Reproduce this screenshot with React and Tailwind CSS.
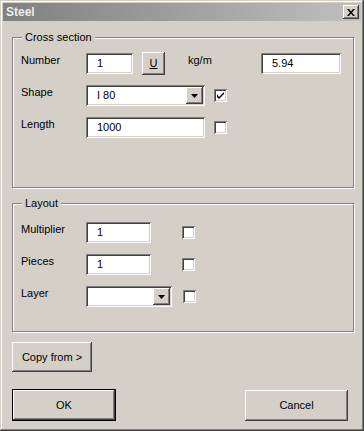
const raised = 'shadow-[inset_-1px_-1px_#404040,inset_1px_1px_#ffffff,inset_-2px_-2px_#808080,inset_2px_2px_#d4d0c8]'
const sunken = 'shadow-[inset_1px_1px_#808080,inset_-1px_-1px_#ffffff,inset_2px_2px_#404040,inset_-2px_-2px_#d4d0c8]'

function Field({ w, value }) {
  return (
    <div className={`${w} h-[21px] bg-white ${sunken} pl-[11px] flex items-center`}>{value}</div>
  )
}

function Combo({ w, value }) {
  return (
    <div className={`${w} h-[21px] bg-white ${sunken} pl-[11px] pr-[2px] py-[2px] flex items-center`}>
      <span className="flex-1">{value}</span>
      <div className={`w-[17px] h-[17px] bg-[#d4d0c8] ${raised} flex items-center justify-center`}>
        <svg width="7" height="4" viewBox="0 0 7 4"><path d="M0 0h7L3.5 4z" fill="#000" /></svg>
      </div>
    </div>
  )
}

function Check({ on, cls = '' }) {
  return (
    <div className={`w-[13px] h-[13px] bg-white ${sunken} flex items-center justify-center ${cls}`}>
      {on && (
        <svg width="7" height="7" viewBox="0 0 7 7">
          <path d="M0 2v3l2 2l5-5V-0l-5 5z" fill="#000" />
        </svg>
      )}
    </div>
  )
}

function Label({ children, w = 'w-[65px]' }) {
  return <span className={`${w} self-start mt-[1px] leading-[13px]`}>{children}</span>
}

function Group({ title, cls, children }) {
  return (
    <div className={`relative border border-[#808080] shadow-[inset_1px_1px_#ffffff,1px_1px_#ffffff] ${cls}`}>
      <span className="absolute -top-[7px] left-[9px] px-[3px] bg-[#d4d0c8] leading-[13px]">{title}</span>
      {children}
    </div>
  )
}

export default function App() {
  return (
    <div className="w-[364px] h-[431px] bg-[#d4d0c8] p-[3px] text-[11px] text-black font-['Liberation_Sans',Arial,sans-serif] shadow-[inset_-1px_-1px_#404040,inset_1px_1px_#d4d0c8,inset_-2px_-2px_#808080,inset_2px_2px_#ffffff] flex flex-col">
      <div className="h-[18px] bg-gradient-to-r from-[#808080] to-[#c0c0c0] flex items-center pl-[3px] pr-[2px]">
        <span className="flex-1 font-bold text-[12px] text-[#ececec]">Steel</span>
        <div className={`w-[16px] h-[14px] bg-[#d4d0c8] ${raised} flex items-center justify-center`}>
          <svg width="8" height="7" viewBox="0 0 8 7"><path d="M0 0h2l2 2.5L6 0h2L5 3.5L8 7H6L4 4.5L2 7H0l3-3.5z" fill="#000" /></svg>
        </div>
      </div>

      <div className="pl-[9px] pr-[7px] flex flex-col">
        <Group title="Cross section" cls="mt-[16px] h-[151px] pt-[15px] pl-[8px]">
          <div className="flex items-center h-[21px]">
            <Label>Number</Label>
            <Field w="w-[47px]" value="1" />
            <div className={`ml-[9px] w-[23px] h-[23px] bg-[#d4d0c8] ${raised} flex items-center justify-center underline`}>U</div>
            <span className="ml-[23px] w-[73px] self-start mt-[1px] leading-[13px]">kg/m</span>
            <Field w="w-[80px]" value="5.94" />
          </div>
          <div className="flex items-center h-[21px] mt-[11px]">
            <Label>Shape</Label>
            <Combo w="w-[119px]" value="I 80" />
            <Check on cls="ml-[9px]" />
          </div>
          <div className="flex items-center h-[21px] mt-[11px]">
            <Label>Length</Label>
            <Field w="w-[119px]" value="1000" />
            <Check cls="ml-[9px]" />
          </div>
        </Group>

        <Group title="Layout" cls="mt-[15px] h-[129px] pt-[18px] pl-[8px]">
          <div className="flex items-center h-[21px]">
            <Label>Multiplier</Label>
            <Field w="w-[65px]" value="1" />
            <Check cls="ml-[31px]" />
          </div>
          <div className="flex items-center h-[21px] mt-[11px]">
            <Label>Pieces</Label>
            <Field w="w-[65px]" value="1" />
            <Check cls="ml-[31px]" />
          </div>
          <div className="flex items-center h-[21px] mt-[11px]">
            <Label>Layer</Label>
            <Combo w="w-[86px]" value="" />
            <Check cls="ml-[11px]" />
          </div>
        </Group>

        <div className={`mt-[10px] w-[80px] h-[30px] bg-[#d4d0c8] ${raised} flex items-center justify-center`}>Copy from &gt;</div>

        <div className="mt-[17px] flex justify-between pr-[6px]">
          <div className="w-[104px] h-[32px] border border-black">
            <div className={`w-full h-full ${raised} flex items-center justify-center`}>OK</div>
          </div>
          <div className={`mt-[1px] w-[103px] h-[31px] bg-[#d4d0c8] ${raised} flex items-center justify-center`}>Cancel</div>
        </div>
      </div>
    </div>
  )
}
